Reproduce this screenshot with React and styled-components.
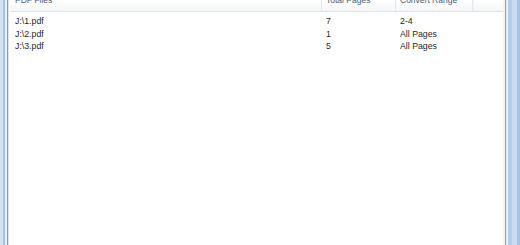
import React from "react";
import styled, { createGlobalStyle } from "styled-components";

const GlobalStyle = createGlobalStyle`
  html, body {
    margin: 0;
    padding: 0;
    background: #ffffff;
  }
  body {
    font-family: "Liberation Sans", Tahoma, sans-serif;
  }
`;

const files = [
  { name: "J:\\1.pdf", pages: "7", range: "2-4" },
  { name: "J:\\2.pdf", pages: "1", range: "All Pages" },
  { name: "J:\\3.pdf", pages: "5", range: "All Pages" },
];

const columns = [
  { label: "PDF Files", width: 312, pad: 5 },
  { label: "Total Pages", width: 74, pad: 4 },
  { label: "Convert Range", width: 77, pad: 4 },
];

export default function App() {
  return (
    <>
      <GlobalStyle />
      <Window>
        <FrameEdge side="left" />
        <ListView>
          <Header>
            {columns.map((c) => (
              <HeaderCell key={c.label} width={c.width} pad={c.pad}>
                <span>{c.label}</span>
              </HeaderCell>
            ))}
            <HeaderFiller />
          </Header>
          <Rows>
            {files.map((f) => (
              <Row key={f.name}>
                <Cell width={columns[0].width} pad={columns[0].pad}>
                  {f.name}
                </Cell>
                <Cell width={columns[1].width} pad={columns[1].pad}>
                  {f.pages}
                </Cell>
                <Cell width={columns[2].width} pad={columns[2].pad}>
                  {f.range}
                </Cell>
              </Row>
            ))}
          </Rows>
        </ListView>
        <FrameEdge side="right" />
      </Window>
    </>
  );
}

const Window = styled.div`
  display: flex;
  width: 520px;
  height: 245px;
  overflow: hidden;
  background: #ffffff;
`;

const FrameEdge = styled.div`
  flex: none;
  width: ${(p) => (p.side === "left" ? "7px" : "17px")};
  background: ${(p) =>
    p.side === "left"
      ? "linear-gradient(to right, #d3e2f3 0 3px, #a9c3e4 3px 5px, #e6eef8 5px 7px)"
      : "linear-gradient(to right, #f4f4f4 0 2px, #9a9a9a 2px 3px, #e9eef5 3px 5px, #b7cde9 5px 9px, #c9dcf1 9px 14px, #a8c2e2 14px 17px)"};
`;

const ListView = styled.div`
  flex: 1;
  display: flex;
  flex-direction: column;
  border-left: 1px solid #9a9a9a;
  box-shadow: inset 1px 0 0 #e2e2e2;
  padding-left: 2px;
  background: #ffffff;
`;

const Header = styled.div`
  display: flex;
  height: 11px;
  border-bottom: 1px solid #dfe3e8;
  background: linear-gradient(to bottom, #ffffff, #f5f6f8);
  overflow: hidden;
`;

const HeaderCell = styled.div`
  flex: none;
  width: ${(p) => p.width}px;
  padding-left: ${(p) => p.pad}px;
  box-sizing: border-box;
  border-right: 1px solid #e4e7eb;
  font-size: 8.5px;
  color: #4c5e78;
  line-height: 11px;
  white-space: nowrap;

  span {
    display: block;
    margin-top: -5px;
  }
`;

const HeaderFiller = styled.div`
  flex: 1;
  border-left: 1px solid #f3f4f6;
`;

const Rows = styled.div`
  display: flex;
  flex-direction: column;
  padding-top: 2.5px;
`;

const Row = styled.div`
  display: flex;
  height: 12.75px;
  align-items: center;
`;

const Cell = styled.div`
  flex: none;
  width: ${(p) => p.width}px;
  padding-left: ${(p) => p.pad}px;
  box-sizing: border-box;
  font-size: 8.75px;
  color: #1f1f1f;
  white-space: nowrap;
`;
